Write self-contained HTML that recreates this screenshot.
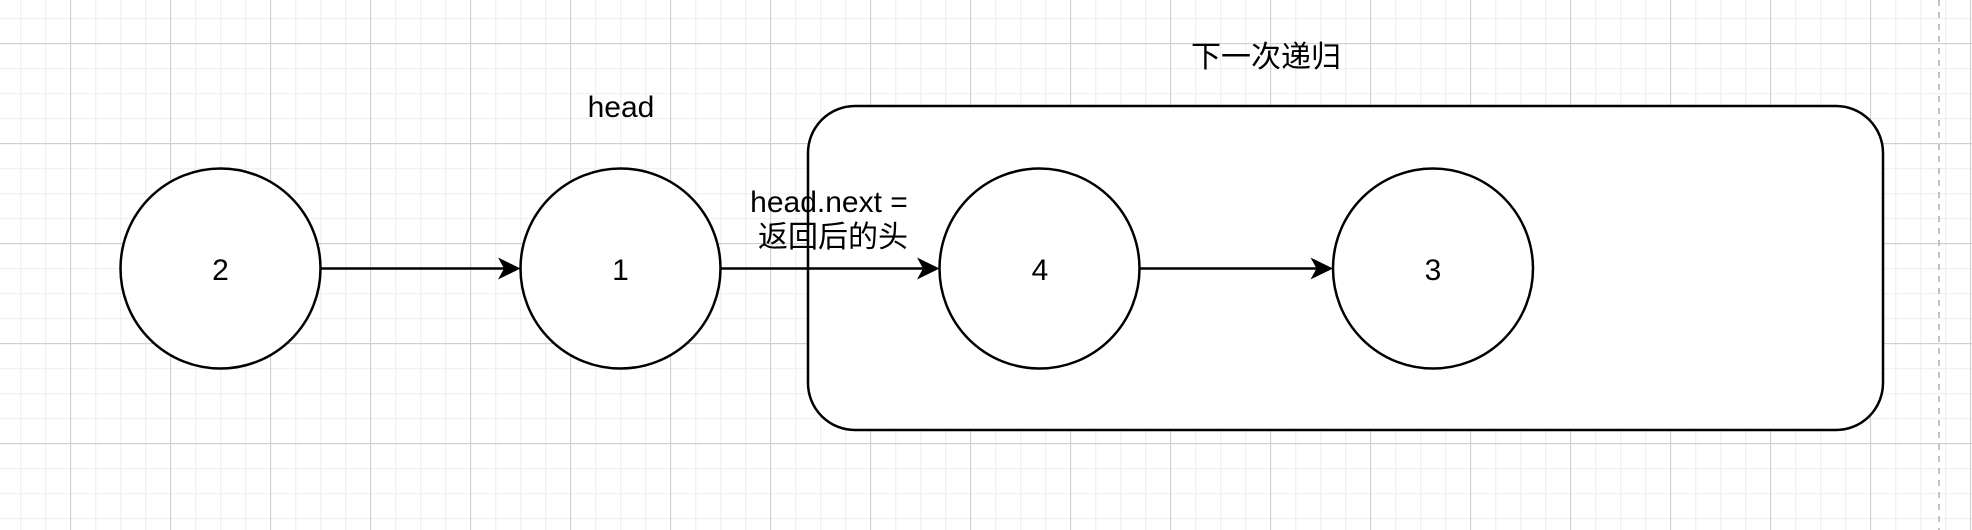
<!DOCTYPE html>
<html><head><meta charset="utf-8"><style>
html,body{margin:0;padding:0;background:#fff;}
svg{display:block;}
text{font-family:"Liberation Sans","Noto Sans CJK SC",sans-serif;fill:#000;}
</style></head><body>
<svg width="1972" height="530" viewBox="0 0 1972 530" xmlns="http://www.w3.org/2000/svg">
<defs>
<pattern id="minor" x="20" y="18" width="25" height="25" patternUnits="userSpaceOnUse">
<path d="M0.5 0V25M0 0.5H25" stroke="#f1f1f1" stroke-width="1.6" fill="none"/>
</pattern>
<pattern id="major" x="70" y="43" width="100" height="100" patternUnits="userSpaceOnUse">
<path d="M0.5 0V100M0 0.5H100" stroke="#d0d0d0" stroke-width="1.2" fill="none"/>
</pattern>
</defs>
<rect width="1972" height="530" fill="url(#minor)"/>
<rect width="1972" height="530" fill="url(#major)"/>
<line x1="1939" y1="0" x2="1939" y2="530" stroke="#c4c4c4" stroke-width="2" stroke-dasharray="6 6"/>

<rect x="808" y="106" width="1075" height="324" rx="47" ry="47" fill="#fff" stroke="#000" stroke-width="2.5"/>

<g fill="#fff" stroke="#000" stroke-width="2.5">
<circle cx="220.5" cy="268.5" r="100"/>
<circle cx="620.5" cy="268.5" r="100"/>
<circle cx="1039.5" cy="268.5" r="100"/>
<circle cx="1433" cy="268.5" r="100"/>
</g>

<g stroke="#000" stroke-width="2.5">
<line x1="320.5" y1="268.5" x2="512" y2="268.5"/>
<line x1="720.5" y1="268.5" x2="932" y2="268.5"/>
<line x1="1139.5" y1="268.5" x2="1326" y2="268.5"/>
</g>
<g fill="#000">
<path d="M520.5 268.5 L498 257.5 L504 268.5 L498 279.5 Z"/>
<path d="M939.5 268.5 L917 257.5 L923 268.5 L917 279.5 Z"/>
<path d="M1333 268.5 L1310.5 257.5 L1316.5 268.5 L1310.5 279.5 Z"/>
</g>

<g font-size="30" text-anchor="middle">
<text x="220.5" y="280">2</text>
<text x="620.5" y="280">1</text>
<text x="1040" y="280">4</text>
<text x="1433" y="280">3</text>
<text x="621" y="117">head</text>
<text x="829" y="212">head.next =</text>
<text x="833" y="247">返回后的头</text>
<text x="1266" y="67">下一次递归</text>
</g>
</svg>
</body></html>
